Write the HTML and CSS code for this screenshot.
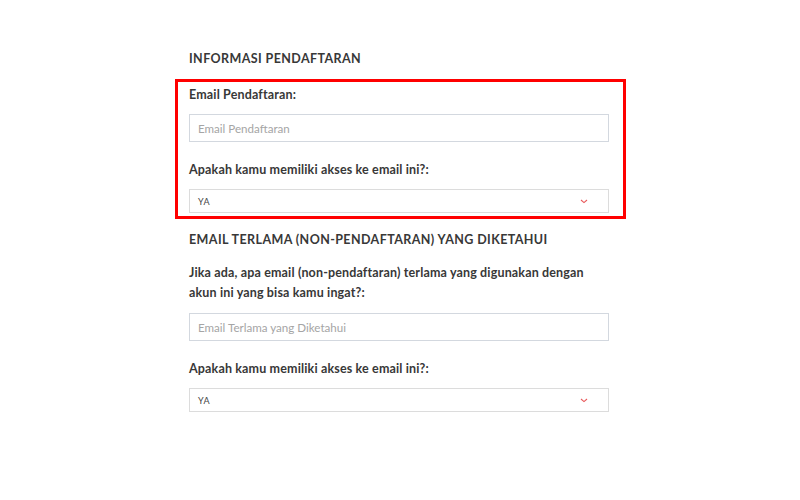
FILE: index.html
```html
<!DOCTYPE html>
<html>
<head>
    <title>Informasi Pendaftaran</title>
    <link rel="stylesheet" href="styles.css">
</head>
<body>
<div class="form">
    <h3 class="section-title">Informasi Pendaftaran</h3>

    <div class="highlight">
        <label class="field-label">Email Pendaftaran:</label>
        <input class="text-input" type="text" placeholder="Email Pendaftaran">

        <label class="field-label gap">Apakah kamu memiliki akses ke email ini?:</label>
        <div class="select">
            <span>YA</span>
            <svg width="8" height="5" viewBox="0 0 8 5"><path d="M1 1l3 2.6L7 1" fill="none" stroke="#e8595b" stroke-width="1.1"/></svg>
        </div>
    </div>

    <h3 class="section-title second">Email Terlama (Non-Pendaftaran) yang Diketahui</h3>

    <p class="field-text">Jika ada, apa email (non-pendaftaran) terlama yang digunakan dengan akun ini yang bisa kamu ingat?:</p>
    <input class="text-input" type="text" placeholder="Email Terlama yang Diketahui">

    <label class="field-label gap">Apakah kamu memiliki akses ke email ini?:</label>
    <div class="select">
        <span>YA</span>
        <svg width="8" height="5" viewBox="0 0 8 5"><path d="M1 1l3 2.6L7 1" fill="none" stroke="#e8595b" stroke-width="1.1"/></svg>
    </div>
</div>
</body>
</html>
```

FILE: styles.css
```css
body {
    font-family: Lato, "Open Sans", sans-serif;
    margin: 0;
    background: #fff;
    color: #383838;
}
.form {
    width: 420px;
    margin: 0 auto;
    padding-top: 51px;
    padding-right: 2px;
}
.section-title {
    margin: 0;
    font-size: 12.5px;
    line-height: 16px;
    font-weight: 700;
    text-transform: uppercase;
    letter-spacing: 0.4px;
    color: #383838;
}
.section-title.second {
    margin-top: 13px;
}
.highlight {
    border: 3px solid #f00;
    margin: 12px -17px 0 -14px;
    padding: 5px 14px 3px 11px;
}
.field-label {
    display: block;
    font-size: 12.5px;
    line-height: 16px;
    font-weight: 700;
    letter-spacing: 0.15px;
    color: #383838;
    margin-bottom: 11px;
}
.field-label.gap {
    margin-top: 20px;
}
.field-text {
    margin: 15px 0 10px;
    font-size: 12.5px;
    line-height: 20px;
    font-weight: 700;
    letter-spacing: 0.15px;
    color: #383838;
}
.text-input {
    display: block;
    box-sizing: border-box;
    width: 100%;
    height: 28px;
    margin: 0;
    padding: 0 8px;
    border: 1px solid #d3d8df;
    font-family: Lato, sans-serif;
    font-size: 11.6px;
    color: #333;
}
.text-input::placeholder {
    color: #a5a5a5;
}
.select {
    box-sizing: border-box;
    height: 24px;
    display: flex;
    align-items: center;
    justify-content: space-between;
    padding: 0 20px 0 8px;
    border: 1px solid #dcdcdc;
    font-size: 9px;
    letter-spacing: 0.6px;
    color: #444;
}
```
